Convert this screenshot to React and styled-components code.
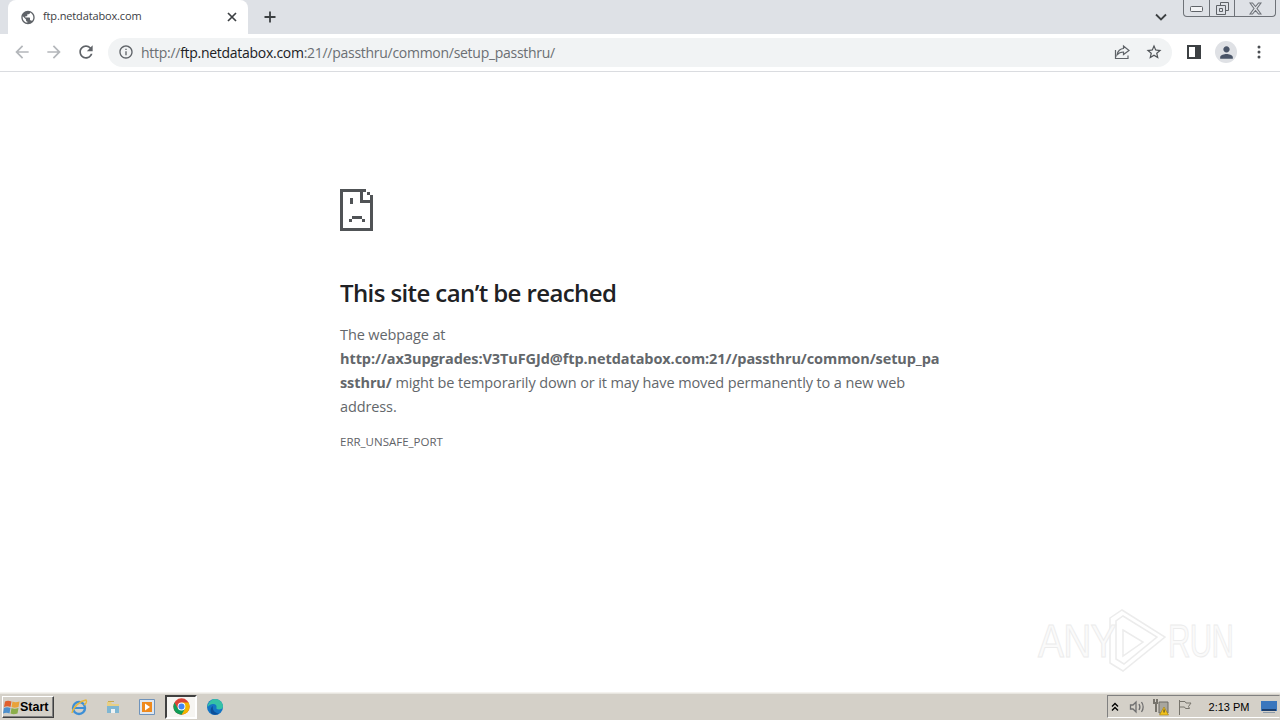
import React from 'react';
import styled, { createGlobalStyle } from 'styled-components';

const GlobalStyle = createGlobalStyle`
  html, body { margin: 0; padding: 0; height: 100%; background: #fff; }
  #root { height: 100%; }
`;

const Page = styled.div`
  width: 1280px;
  height: 720px;
  display: flex;
  flex-direction: column;
  overflow: hidden;
  font-family: "Open Sans", "Noto Sans", sans-serif;
`;

const TabStrip = styled.div`
  height: 34px;
  flex: none;
  background: #dee1e6;
  display: flex;
  padding-left: 8px;
`;

const Tab = styled.div`
  width: 240px;
  height: 34px;
  box-sizing: border-box;
  padding: 0 8px 0 13px;
  background: #fff;
  border-radius: 8px 8px 0 0;
  display: flex;
  align-items: center;
  gap: 7px;
`;

const TabTitle = styled.span`
  flex: 1;
  font-size: 11px;
  line-height: 14px;
  margin-bottom: 2px;
  letter-spacing: -0.14px;
  color: #3c4043;
`;

const IconSlot = styled.span`
  display: flex;
  align-items: center;
  justify-content: center;
  flex: none;
  width: ${p => p.$size || 16}px;
  height: ${p => p.$size || 16}px;
  color: ${p => p.$color || '#5f6368'};
  margin-left: ${p => p.$left || 0}px;
`;

const NewTab = styled(IconSlot)`
  align-self: center;
`;

const StripEnd = styled.div`
  margin-left: auto;
  display: flex;
  align-items: flex-start;
`;

const Chevron = styled(IconSlot)`
  margin-top: 9px;
  margin-right: 14px;
`;

const WindowControls = styled.div`
  width: 93px;
  height: 17px;
  margin-right: 4px;
  box-sizing: border-box;
  display: grid;
  grid-template-columns: 25px 25px 1fr;
  border: 1px solid #6e7278;
  border-top: 0;
  border-radius: 0 0 4px 4px;
`;

const WindowButton = styled.div`
  display: flex;
  align-items: center;
  justify-content: center;
  border-left: ${p => (p.$first ? '0' : '1px solid #6e7278')};
`;

const Toolbar = styled.div`
  height: 38px;
  flex: none;
  box-sizing: border-box;
  background: #fff;
  border-bottom: 1px solid #dadce0;
  display: flex;
  align-items: center;
  padding: 0 0 1px 12px;
`;

const NavGroup = styled.div`
  display: flex;
  flex: none;
  gap: 12px;
  width: 96px;
`;

const Omnibox = styled.div`
  flex: none;
  width: 1064px;
  height: 29px;
  box-sizing: border-box;
  background: #f1f3f4;
  border-radius: 15px;
  display: flex;
  align-items: center;
  padding: 0 9px 0 10px;
`;

const Url = styled.div`
  flex: 1;
  margin-left: 7px;
  font-size: 14px;
  letter-spacing: -0.28px;
  color: #6b6f73;
  white-space: nowrap;
`;

const UrlHost = styled.span`
  color: #202124;
`;

const OmniActions = styled.div`
  display: flex;
  gap: 14px;
`;

const ToolActions = styled.div`
  display: flex;
  align-items: center;
  flex: none;
  margin-left: 12px;
  gap: 11px;
`;

const Avatar = styled.span`
  width: 22px;
  height: 22px;
  margin-right: 1px;
  border-radius: 50%;
  background: #dfe1e5;
  display: flex;
  align-items: center;
  justify-content: center;
  overflow: hidden;
`;

const Main = styled.main`
  flex: 1;
  position: relative;
  background: #fff;
  padding: 117px 0 0 340px;
`;

const ErrorBox = styled.div`
  width: 600px;
`;

const SadPage = styled.svg`
  display: block;
  width: 33px;
  height: 42px;
`;

const Heading = styled.h1`
  margin: 45px 0 0;
  font-size: 24px;
  line-height: 34px;
  font-weight: 600;
  letter-spacing: -0.6px;
  color: #202124;
`;

const Message = styled.p`
  margin: 13px 0 0;
  font-size: 14.5px;
  line-height: 24px;
  font-weight: 400;
  letter-spacing: -0.11px;
  color: #63676b;
`;

const Line = styled.span`
  display: block;
  white-space: nowrap;
`;

const Bold = styled.strong`
  font-weight: 700;
  letter-spacing: -0.09px;
`;

const ErrorCode = styled.div`
  margin-top: 15px;
  font-size: 11.5px;
  line-height: 16px;
  letter-spacing: 0;
  color: #5f6368;
`;

const Watermark = styled.div`
  position: absolute;
  left: 1038px;
  top: 537px;
  width: 197px;
  height: 64px;
  display: flex;
  align-items: center;
`;

const WatermarkWord = styled.span`
  font-family: "Liberation Sans", sans-serif;
  font-size: 47px;
  line-height: 64px;
  letter-spacing: -1px;
  color: #fafafa;
  -webkit-text-stroke: 1px #ececec;
  display: inline-block;
  transform: scaleX(${p => p.$scale});
  transform-origin: left center;
  width: ${p => p.$width}px;
  white-space: nowrap;
`;

const Taskbar = styled.footer`
  height: 28px;
  flex: none;
  box-sizing: border-box;
  background: #d4d0c8;
  border-top: 1px solid #f4f2ee;
  box-shadow: inset 0 1px 0 #e8e6e0;
  display: flex;
  align-items: center;
  padding-left: 2px;
`;

const StartButton = styled.button`
  width: 52px;
  height: 22px;
  box-sizing: border-box;
  padding: 0;
  background: #d4d0c8;
  border: 1px solid;
  border-color: #fff #404040 #404040 #fff;
  box-shadow: inset -1px -1px 0 #808080;
  display: flex;
  align-items: center;
  gap: 0;
  font-family: "Liberation Sans", sans-serif;
  font-size: 12.5px;
  font-weight: 700;
  color: #000;
`;

const QuickLaunch = styled.div`
  display: flex;
  align-items: center;
  margin-left: 8px;
`;

const TaskIcon = styled.div`
  width: 34px;
  height: 24px;
  box-sizing: border-box;
  display: flex;
  align-items: center;
  justify-content: center;
  ${p => p.$active && `
    background: #f6f5f2;
    border: 2px solid;
    border-color: #404040 #fff #fff #404040;
    width: 32px;
    margin: 0 1px;
  `}
`;

const Tray = styled.div`
  margin-left: auto;
  width: 173px;
  height: 23px;
  box-sizing: border-box;
  border: 1px solid;
  border-color: #808080 #d4d0c8 #fff #808080;
  display: flex;
  align-items: center;
  padding-left: 1px;
`;

const Clock = styled.span`
  margin-left: 13px;
  width: 44px;
  text-align: center;
  font-family: "Liberation Sans", sans-serif;
  font-size: 11px;
  color: #000;
`;

const TrayDisplay = styled.svg`
  margin-left: 10px;
  flex: none;
`;

const Icon = ({ d, size = 16, box = 24, fill = 'currentColor' }) => (
  <svg width={size} height={size} viewBox={`0 0 ${box} ${box}`} fill={fill}>
    <path d={d} />
  </svg>
);

const ARROW_BACK = 'M20 11H7.83l5.59-5.59L12 4l-8 8 8 8 1.41-1.41L7.83 13H20v-2z';
const ARROW_FORWARD = 'M12 4l-1.41 1.41L16.17 11H4v2h12.17l-5.58 5.59L12 20l8-8z';
const REFRESH = 'M17.65 6.35C16.2 4.9 14.21 4 12 4c-4.42 0-7.99 3.58-7.99 8s3.57 8 7.99 8c3.73 0 6.84-2.55 7.73-6h-2.08c-.82 2.33-3.04 4-5.65 4-3.31 0-6-2.69-6-6s2.69-6 6-6c1.66 0 3.14.69 4.22 1.78L13 11h7V4l-2.35 2.35z';
const GLOBE = 'M12 2C6.48 2 2 6.48 2 12s4.48 10 10 10 10-4.48 10-10S17.52 2 12 2zm-1 17.93c-3.95-.49-7-3.85-7-7.93 0-.62.08-1.21.21-1.79L9 15v1c0 1.1.9 2 2 2v1.93zm6.9-2.54c-.26-.81-1-1.39-1.9-1.39h-1v-3c0-.55-.45-1-1-1H8v-2h2c.55 0 1-.45 1-1V7h2c1.1 0 2-.9 2-2v-.41c2.93 1.19 5 4.06 5 7.41 0 2.08-.8 3.97-2.1 5.39z';
const INFO = 'M11 7h2v2h-2zm0 4h2v6h-2zm1-9C6.48 2 2 6.48 2 12s4.48 10 10 10 10-4.48 10-10S17.52 2 12 2zm0 18c-4.41 0-8-3.59-8-8s3.59-8 8-8 8 3.59 8 8-3.59 8-8 8z';
const STAR = 'M22 9.24l-7.19-.62L12 2 9.19 8.63 2 9.24l5.46 4.73L5.82 21 12 17.27 18.18 21l-1.63-7.03L22 9.24zM12 15.4l-3.76 2.27 1-4.28-3.32-2.88 4.38-.38L12 6.1l1.71 4.04 4.38.38-3.32 2.88 1 4.28L12 15.4z';
const PERSON = 'M12 12c2.21 0 4-1.79 4-4s-1.79-4-4-4-4 1.79-4 4 1.79 4 4 4zm0 2c-2.67 0-8 1.34-8 4v2h16v-2c0-2.66-5.33-4-8-4z';

const Stroke = ({ size = 16, box = 16, width = 1.6, color = 'currentColor', children }) => (
  <svg width={size} height={size} viewBox={`0 0 ${box} ${box}`} fill="none" stroke={color} strokeWidth={width}>
    {children}
  </svg>
);

const SadPageIcon = () => (
  <SadPage viewBox="0 0 33 42" fill="#505356">
    <path d="M0 0h21v3H3v36h27V14h3v28H0z" />
    <path d="M20 0h3v11h10v3H20z" />
    <path d="M23 0h3v3h-3zM27 3h3v3h-3zM30 6h3v3h-3zM30 9h3v5h-3z" />
    <path d="M10 9h3v6h-3z" />
    <path d="M12 27h10v3H12zM9 30h3v3H9zM22 30h3v3h-3z" />
  </SadPage>
);

const WindowsFlag = () => (
  <svg width="17" height="18" viewBox="0 0 17 18">
    <path d="M2 3.500c2-1 4-1 6.500 0l-1 5.500c-2-1-4-1-6.500 0z" fill="#e0602e" />
    <path d="M9.500 3.500c2 1 4 1 7 0l-1 5.500c-3 1-5 1-7 0z" fill="#e9a23a" />
    <path d="M1 10c2-1 4-1 6.500 0l-1 5.500c-2-1-4-1-6.500 0z" fill="#4d8fcc" />
    <path d="M8.500 10c2 1 4 1 7 0l-1 5.500c-3 1-5 1-7 0z" fill="#8cae4a" />
  </svg>
);

const IeIcon = () => (
  <svg width="18" height="18" viewBox="0 0 18 18" fill="none">
    <ellipse cx="9" cy="10" rx="6" ry="6" stroke="#3d8fd6" strokeWidth="2.4" />
    <path d="M4 10h10" stroke="#3d8fd6" strokeWidth="2" />
    <path d="M2 15C3 9 10 3 16 2c1.500 2-.5 4-2 5" stroke="#e7b73b" strokeWidth="1.4" />
  </svg>
);

const FolderIcon = () => (
  <svg width="16" height="16" viewBox="0 0 16 16">
    <path d="M2 3h4l1 2h7v9H2z" fill="#e8cf85" />
    <path d="M2 7h12v7H2z" fill="#7fb6d2" />
    <path d="M6 10h4v4H6z" fill="#eef3f5" />
    <path d="M3 2h6v1H3z" fill="#c9a94e" />
  </svg>
);

const MediaIcon = () => (
  <svg width="16" height="16" viewBox="0 0 16 16">
    <path d="M0.500 0.500h15v15h-15z" fill="#dfe7f0" stroke="#6f93bb" />
    <path d="M3 3h10v10H3z" fill="#ef8a1d" />
    <path d="M6 4.500l5 3.500-5 3.500z" fill="#fff" />
  </svg>
);

const ChromeIcon = () => (
  <svg width="17" height="17" viewBox="0 0 48 48">
    <circle cx="24" cy="24" r="23" fill="#db4437" />
    <path d="M24 47a23 23 0 0 0 20-34H24z" fill="#f4b400" />
    <path d="M24 47L34 30 14 30 4 13a23 23 0 0 0 20 34z" fill="#0f9d58" />
    <circle cx="24" cy="24" r="11" fill="#fff" />
    <circle cx="24" cy="24" r="8.500" fill="#4285f4" />
  </svg>
);

const EdgeIcon = () => (
  <svg width="18" height="18" viewBox="0 0 18 18">
    <circle cx="9" cy="9" r="8" fill="#1474c4" />
    <path d="M1.500 9C2 4 6 1 9 1c4 0 8 3 8 7.500 0 2-2 3-4 3s-3-1-2.500-2C11 7 9 5.500 6.500 6 4 6.500 2.500 8 1.500 9z" fill="#35c1a6" />
    <path d="M6 16c-2-2-2-6 1-8-1 3 1 7 6 7.500-2 1.500-5 1.500-7 .5z" fill="#0c4f9a" />
  </svg>
);

const TrayIcons = () => (
  <>
    <IconSlot $size={12} $color="#000">
      <Stroke size={10} box={10} width={1.4}>
        <path d="M2 4.500l3-3 3 3M2 8.500l3-3 3 3" />
      </Stroke>
    </IconSlot>
    <IconSlot $size={18} $left={7} $color="#6f6f6f">
      <Stroke size={18} box={18} width={1.3}>
        <path d="M2.500 7v4h2.500l3 3V4L5 7zM11 6c1.200 2 1.200 4 0 6M13.500 4c2 3 2 7 0 10" />
      </Stroke>
    </IconSlot>
    <IconSlot $size={20} $left={5}>
      <svg width="20" height="20" viewBox="0 0 20 20">
        <path d="M2 2h2v3h1V2h2v5H6v8H4V7H2z" fill="#77746c" />
        <path d="M8 5h9v11H8z" fill="#a8a69e" stroke="#6d6b64" />
        <path d="M13 10l4.500 8h-9z" fill="#f2c21a" stroke="#a07d10" strokeWidth="0.6" />
        <path d="M12.600 12.500h.9v3h-.9z" fill="#222" />
      </svg>
    </IconSlot>
    <IconSlot $size={18} $left={5} $color="#77746c">
      <Stroke size={18} box={18} width={1}>
        <path d="M3.500 2v15M4 3.500h5l1 1.500h5l-2.500 3.500 1 2H9.500L8.500 9H4" />
      </Stroke>
    </IconSlot>
  </>
);

export default function App() {
  return (
    <Page>
      <GlobalStyle />
      <TabStrip>
        <Tab>
          <IconSlot $size={16} $left={-1}>
            <Icon d={GLOBE} size={17} />
          </IconSlot>
          <TabTitle>ftp.netdatabox.com</TabTitle>
          <IconSlot $size={16} $color="#3c4043">
            <Stroke size={16} width={1.7}>
              <path d="M4 4l8 8M12 4l-8 8" />
            </Stroke>
          </IconSlot>
        </Tab>
        <NewTab $size={16} $left={14} $color="#3c4043">
          <Stroke size={16} width={1.8}>
            <path d="M8 2.500v11M2.500 8h11" />
          </Stroke>
        </NewTab>
        <StripEnd>
          <Chevron $size={16} $color="#3c4043">
            <Stroke size={16} width={1.8}>
              <path d="M3 5.500l5 5 5-5" />
            </Stroke>
          </Chevron>
          <WindowControls>
            <WindowButton $first>
              <svg width="13" height="7" viewBox="0 0 13 7">
                <rect x="0.500" y="1.500" width="12" height="5" rx="1" fill="#f2f3f5" stroke="#5f6368" />
              </svg>
            </WindowButton>
            <WindowButton>
              <Stroke size={13} box={13} width={1} color="#5f6368">
                <path d="M4.500 3V0.500h8v8H10M0.500 3.500h9v9h-9zM3.500 6.500h3v3h-3z" />
              </Stroke>
            </WindowButton>
            <WindowButton>
              <Stroke size={13} box={13} width={1.1} color="#6e7278">
                <path d="M1 1h2.500L6.500 4.500 9.500 1H12L8 6.500 12 12H9.500L6.500 8.500 3.500 12H1L5 6.500z" />
              </Stroke>
            </WindowButton>
          </WindowControls>
        </StripEnd>
      </TabStrip>

      <Toolbar>
        <NavGroup>
          <IconSlot $size={20} $color="#b4b7bb"><Icon d={ARROW_BACK} size={20} /></IconSlot>
          <IconSlot $size={20} $color="#b4b7bb"><Icon d={ARROW_FORWARD} size={20} /></IconSlot>
          <IconSlot $size={20}><Icon d={REFRESH} size={20} /></IconSlot>
        </NavGroup>
        <Omnibox>
          <IconSlot $size={16}><Icon d={INFO} size={16} /></IconSlot>
          <Url>
            http://<UrlHost>ftp.netdatabox.com</UrlHost>:21//passthru/common/setup_passthru/
          </Url>
          <OmniActions>
            <IconSlot $size={18}>
              <Stroke size={18} box={18} width={1.2}>
                <path d="M2.500 7v8.500h12.500v-3" />
                <path d="M4 12C4.500 8 7.500 5.500 10.500 5.500V3l5.500 4.500-5.500 4V9C8 9 5.500 10 4 12z" />
              </Stroke>
            </IconSlot>
            <IconSlot $size={18} $color="#4f5357"><Icon d={STAR} size={18} /></IconSlot>
          </OmniActions>
        </Omnibox>
        <ToolActions>
          <IconSlot $size={20} $color="#3c4043">
            <svg width="14" height="14" viewBox="0 0 14 14">
              <path d="M0 0h14v14H0z" fill="#3c4043" />
              <path d="M2 2h6v10H2z" fill="#fff" />
            </svg>
          </IconSlot>
          <Avatar>
            <Icon d={PERSON} size={19} fill="#4a5568" />
          </Avatar>
          <IconSlot $size={20} $color="#4a4e52">
            <svg width="4" height="14" viewBox="0 0 4 14" fill="currentColor">
              <circle cx="2" cy="2" r="1.500" />
              <circle cx="2" cy="7" r="1.500" />
              <circle cx="2" cy="12" r="1.500" />
            </svg>
          </IconSlot>
        </ToolActions>
      </Toolbar>

      <Main>
        <ErrorBox>
          <SadPageIcon />
          <Heading>This site can’t be reached</Heading>
          <Message>
            <Line>The webpage at</Line>
            <Line><Bold>http://ax3upgrades:V3TuFGJd@ftp.netdatabox.com:21//passthru/common/setup_pa</Bold></Line>
            <Line><Bold>ssthru/</Bold> might be temporarily down or it may have moved permanently to a new web</Line>
            <Line>address.</Line>
          </Message>
          <ErrorCode>ERR_UNSAFE_PORT</ErrorCode>
        </ErrorBox>
        <Watermark>
          <WatermarkWord $scale={0.83} $width={67}>ANY</WatermarkWord>
          <svg width="63" height="64" viewBox="0 0 63 64" fill="none" stroke="#ececec" strokeWidth="1.5">
            <path d="M5 9L17 1 60 28 18 62 5 54z" />
            <path d="M11 12v38l8 5 33-27-34-21z" />
            <path d="M18 21L38 33 18 47z" />
          </svg>
          <WatermarkWord $scale={0.66} $width={66}>RUN</WatermarkWord>
        </Watermark>
      </Main>

      <Taskbar>
        <StartButton><WindowsFlag />Start</StartButton>
        <QuickLaunch>
          <TaskIcon><IeIcon /></TaskIcon>
          <TaskIcon><FolderIcon /></TaskIcon>
          <TaskIcon><MediaIcon /></TaskIcon>
          <TaskIcon $active><ChromeIcon /></TaskIcon>
          <TaskIcon><EdgeIcon /></TaskIcon>
        </QuickLaunch>
        <Tray>
          <TrayIcons />
          <Clock>2:13 PM</Clock>
          <TrayDisplay width="16" height="14" viewBox="0 0 16 14">
            <path d="M0 1h16v10H0z" fill="#3a76bd" />
            <path d="M1 9h14v2H1z" fill="#1c3f6e" />
            <path d="M2 12h12v1H2z" fill="#8c9aa8" />
          </TrayDisplay>
        </Tray>
      </Taskbar>
    </Page>
  );
}
